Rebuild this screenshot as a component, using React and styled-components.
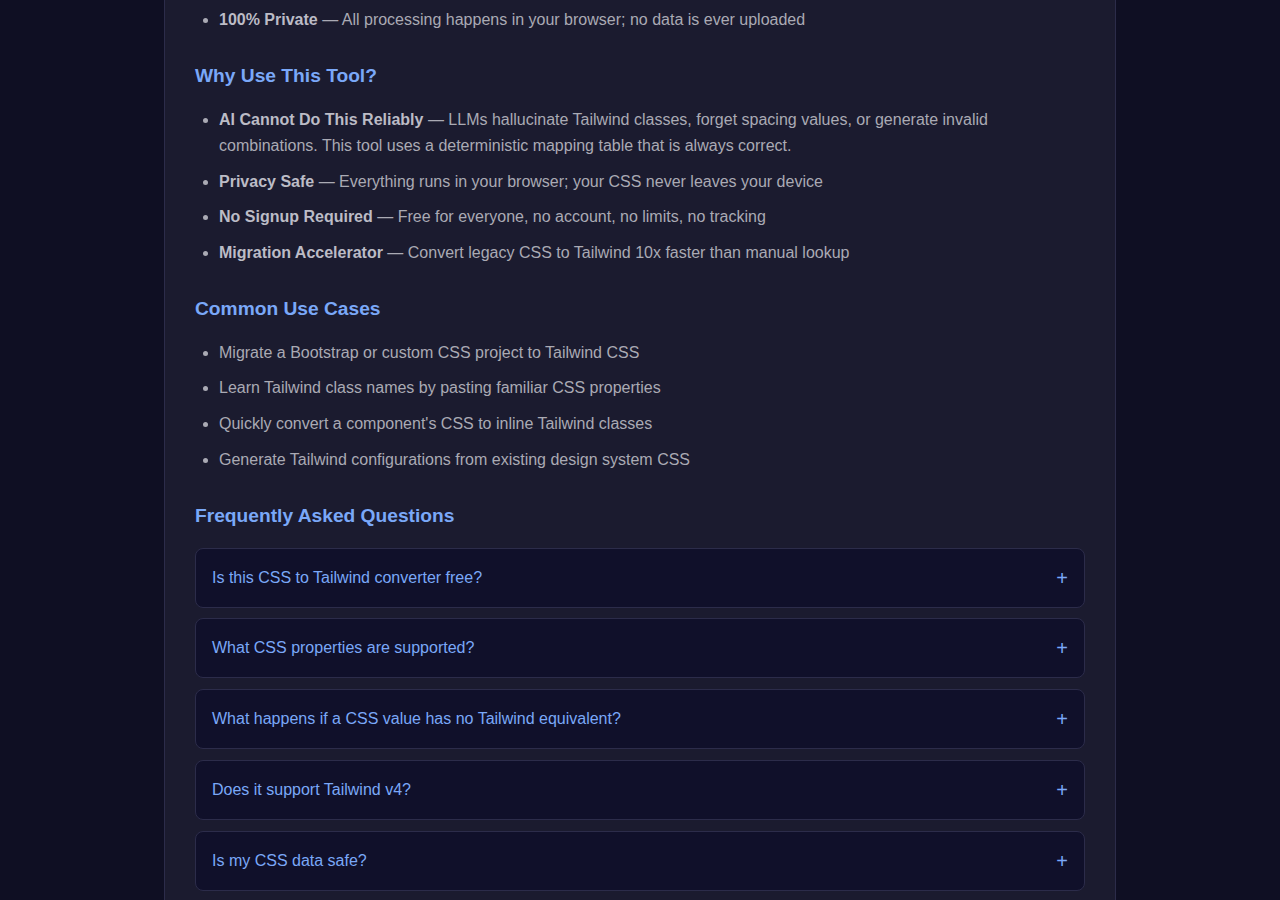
import React from "react";
import styled, { createGlobalStyle } from "styled-components";

const GlobalStyle = createGlobalStyle`
  html, body {
    margin: 0;
    padding: 0;
    background: #0f0f23;
  }
  body {
    font-family: "Liberation Sans", Arial, sans-serif;
    color: #aaaab4;
  }
`;

const Page = styled.main`
  max-width: 952px;
  margin: 0 auto;
  box-sizing: border-box;
  background: #1b1b2f;
  border-left: 1px solid #2c2c4a;
  border-right: 1px solid #2c2c4a;
  padding: 7px 30px 20px;
  min-height: 900px;
`;

const Heading = styled.h2`
  font-size: 19.2px;
  line-height: 22px;
  font-weight: 700;
  color: #7aa8f8;
  margin: 32px 0 ${(p) => (p.$tight ? "21px" : "20px")};
`;

const List = styled.ul`
  margin: 0;
  padding-left: 24px;
`;

const Item = styled.li`
  font-size: 16px;
  line-height: 26px;
  margin-bottom: 9.6px;
  color: #aaaab4;

  strong {
    color: #bcbcc6;
    font-weight: 700;
  }
`;

const FaqList = styled.div`
  display: flex;
  flex-direction: column;
  gap: 10.75px;
`;

const FaqItem = styled.div`
  display: flex;
  align-items: center;
  justify-content: space-between;
  background: #10102a;
  border: 1px solid #2c2c4a;
  border-radius: 8px;
  padding: 16px;
  font-size: 16px;
  line-height: 26px;
  color: #7aa8f8;
  cursor: pointer;
`;

const Plus = styled.span`
  font-size: 20px;
  line-height: 1;
  color: #7aa8f8;
`;

const privateItems = [
  ["100% Private", "All processing happens in your browser; no data is ever uploaded"],
];

const whyItems = [
  [
    "AI Cannot Do This Reliably",
    "LLMs hallucinate Tailwind classes, forget spacing values, or generate invalid combinations. This tool uses a deterministic mapping table that is always correct.",
  ],
  ["Privacy Safe", "Everything runs in your browser; your CSS never leaves your device"],
  ["No Signup Required", "Free for everyone, no account, no limits, no tracking"],
  ["Migration Accelerator", "Convert legacy CSS to Tailwind 10x faster than manual lookup"],
];

const useCases = [
  "Migrate a Bootstrap or custom CSS project to Tailwind CSS",
  "Learn Tailwind class names by pasting familiar CSS properties",
  "Quickly convert a component's CSS to inline Tailwind classes",
  "Generate Tailwind configurations from existing design system CSS",
];

const faqs = [
  "Is this CSS to Tailwind converter free?",
  "What CSS properties are supported?",
  "What happens if a CSS value has no Tailwind equivalent?",
  "Does it support Tailwind v4?",
  "Is my CSS data safe?",
];

function FeatureList({ items }) {
  return (
    <List>
      {items.map(([title, text]) => (
        <Item key={title}>
          <strong>{title}</strong> — {text}
        </Item>
      ))}
    </List>
  );
}

export default function App() {
  return (
    <>
      <GlobalStyle />
      <Page>
        <FeatureList items={privateItems} />

        <Heading>Why Use This Tool?</Heading>
        <FeatureList items={whyItems} />

        <Heading>Common Use Cases</Heading>
        <List>
          {useCases.map((u) => (
            <Item key={u}>{u}</Item>
          ))}
        </List>

        <Heading $tight>Frequently Asked Questions</Heading>
        <FaqList>
          {faqs.map((q) => (
            <FaqItem key={q}>
              <span>{q}</span>
              <Plus>+</Plus>
            </FaqItem>
          ))}
        </FaqList>
      </Page>
    </>
  );
}
